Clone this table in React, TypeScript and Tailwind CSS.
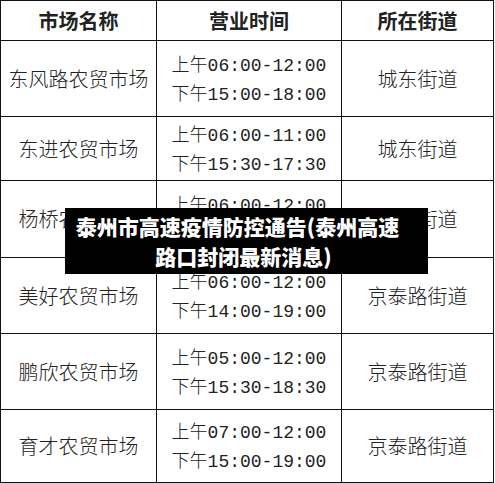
const rows = [
  { name: '东风路农贸市场', am: '06:00-12:00', pm: '15:00-18:00', street: '城东街道', h: 'h-[76px]' },
  { name: '东进农贸市场', am: '06:00-11:00', pm: '15:30-17:30', street: '城东街道', h: 'h-[64px]' },
  { name: '杨桥农贸市场', am: '06:00-12:00', pm: '15:00-18:00', street: '城东街道', h: 'h-[77px]' },
  { name: '美好农贸市场', am: '06:00-12:00', pm: '14:00-19:00', street: '京泰路街道', h: 'h-[76px]' },
  { name: '鹏欣农贸市场', am: '05:00-12:00', pm: '15:30-18:30', street: '京泰路街道', h: 'h-[76px]' },
  { name: '育才农贸市场', am: '07:00-12:00', pm: '15:00-19:00', street: '京泰路街道', h: 'h-[73px]' },
];

const cjk = "font-['Noto_Sans_CJK_SC',sans-serif]";
const mono = "font-['Liberation_Mono','Noto_Sans_CJK_SC',monospace]";

const Time = ({ label, value }: { label: string; value: string }) => (
  <div className="leading-[26px] whitespace-nowrap">
    <span className={`${cjk} text-[18px] font-light`}>{label}</span>
    <span className={`${mono} text-[18px]`}>{value}</span>
  </div>
);

const App = () => {
  return (
    <div className="relative w-[495px] h-[483px] bg-white text-[#222] overflow-hidden">
      <div className="w-[494px] border-l border-t border-[#111]">
        {/* 表头 */}
        <div className={`grid grid-cols-[156px_185px_152px] h-[40px] ${cjk} text-[20px] font-bold`}>
          <div className="flex items-center justify-center border-r border-b border-[#111]">市场名称</div>
          <div className="flex items-center justify-center border-r border-b border-[#111]">营业时间</div>
          <div className="flex items-center justify-center border-r border-b border-[#111]">所在街道</div>
        </div>

        {rows.map((r) => (
          <div key={r.name} className={`grid grid-cols-[156px_185px_152px] ${r.h}`}>
            <div className={`flex items-center justify-center border-r border-b border-[#111] ${cjk} text-[20px] font-light`}>
              {r.name}
            </div>
            <div className="flex flex-col items-center justify-center border-r border-b border-[#111]">
              <Time label="上午" value={r.am} />
              <Time label="下午" value={r.pm} />
            </div>
            <div className={`flex items-center justify-center border-r border-b border-[#111] ${cjk} text-[20px] font-light`}>
              {r.street}
            </div>
          </div>
        ))}
      </div>

      {/* 标题遮罩 */}
      <div
        className={`absolute left-[65px] top-[208px] w-[363px] h-[66px] bg-black text-white ${cjk} text-[21px] font-black leading-[30px] flex flex-col items-center justify-center pl-[2px] pr-[20px] text-center`}
      >
        <div className="whitespace-nowrap">泰州市高速疫情防控通告(泰州高速</div>
        <div className="whitespace-nowrap pl-[12px]">路口封闭最新消息)</div>
      </div>
    </div>
  );
};

export default App;
